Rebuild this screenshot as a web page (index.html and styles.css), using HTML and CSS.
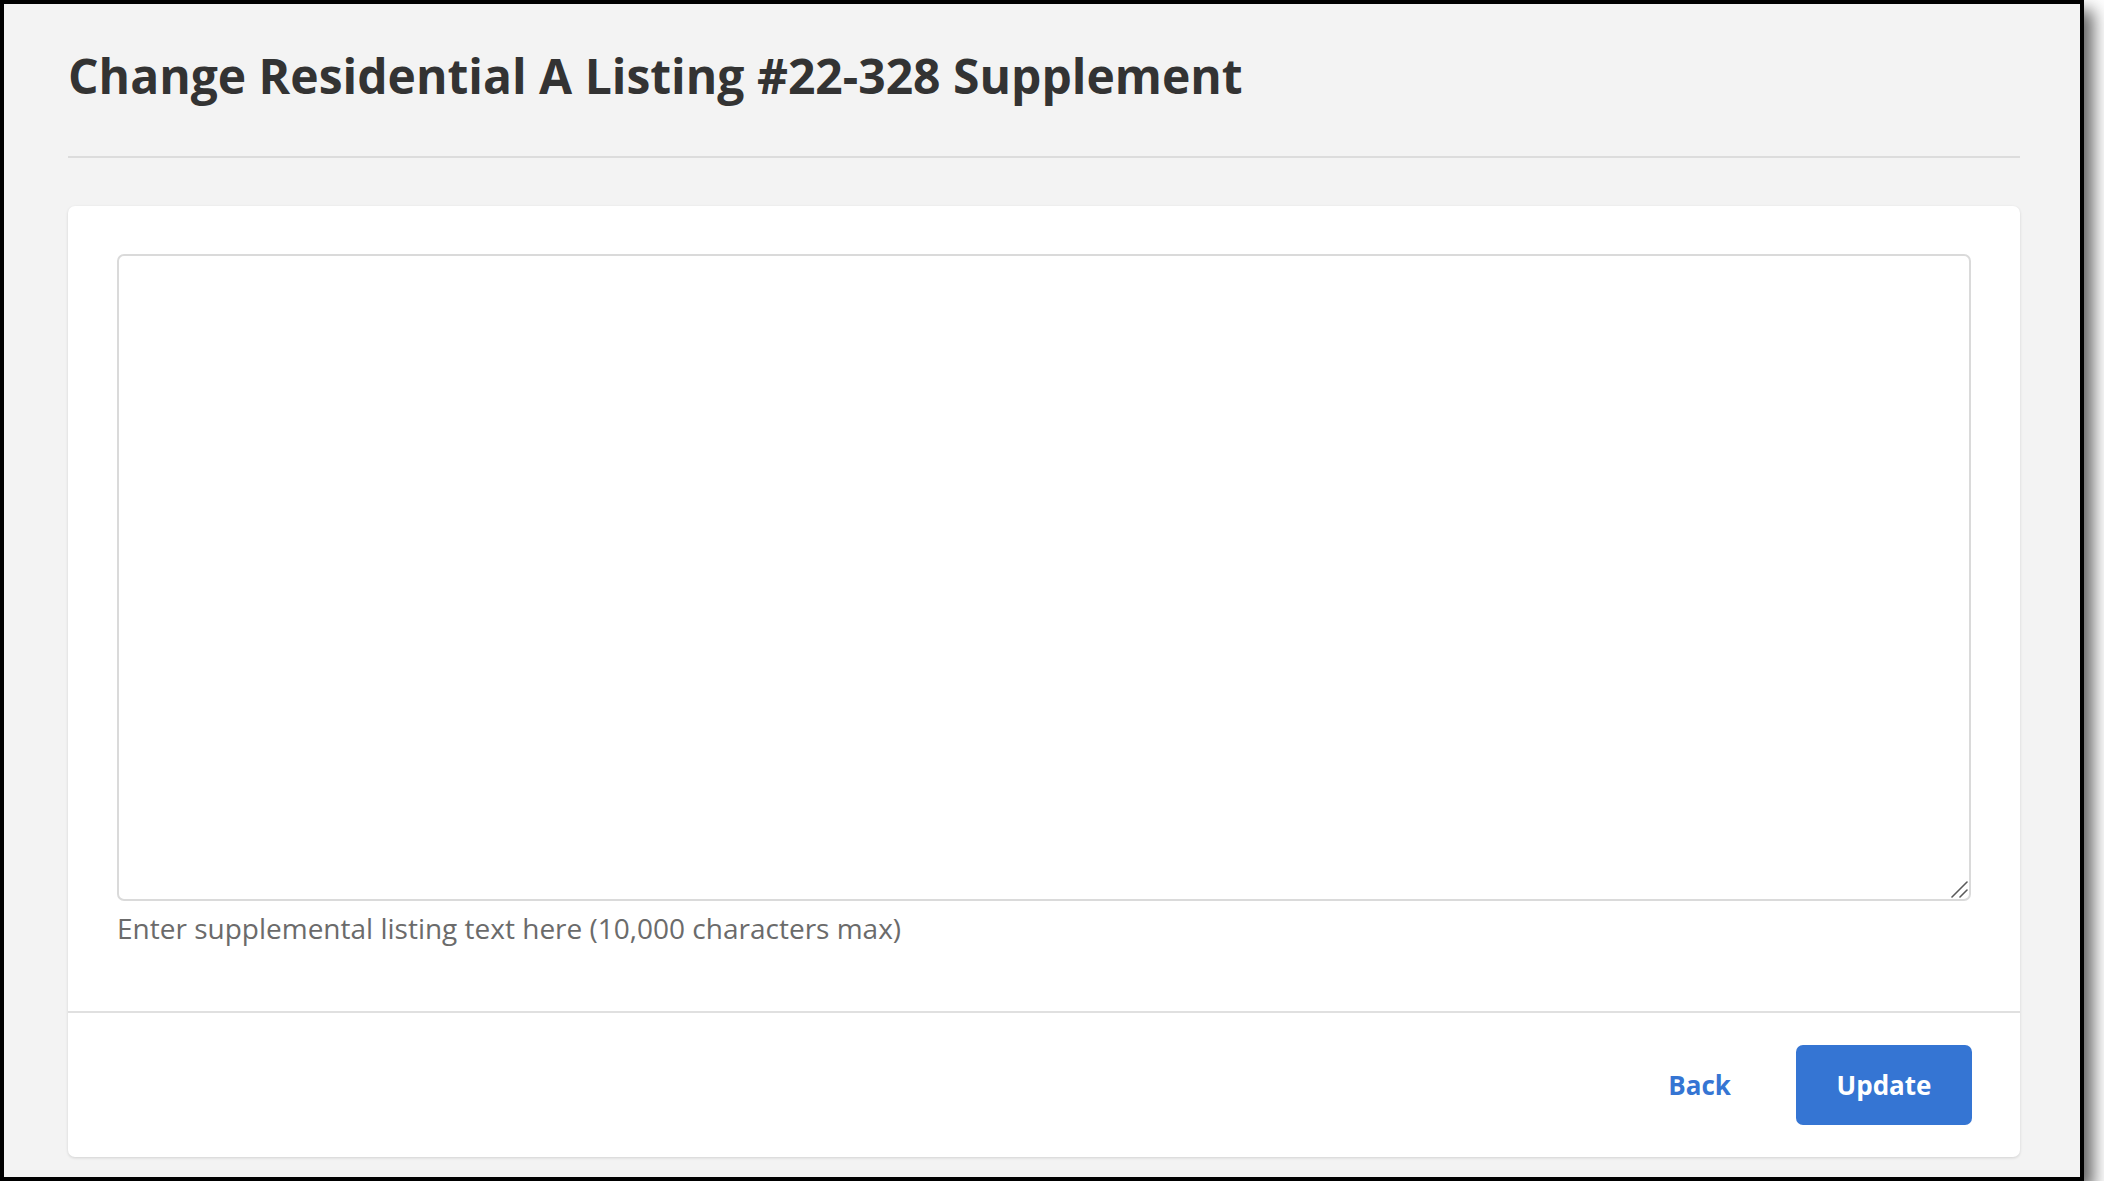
FILE: index.html
```html
<!DOCTYPE html>
<html lang="en">
<head>
<meta charset="utf-8">
<title>Change Residential A Listing #22-328 Supplement</title>
<link rel="stylesheet" href="styles.css">
</head>
<body>
<div class="frame">
  <header class="page-header">
    <h1 class="page-title">Change Residential A Listing #22-328 Supplement</h1>
  </header>
  <section class="card">
    <div class="card-body">
      <div class="input-wrap">
        <textarea class="supplement-input" aria-label="Supplemental listing text"></textarea>
        <svg class="grip" width="18" height="18" viewBox="0 0 18 18" aria-hidden="true">
          <line x1="2" y1="17" x2="17" y2="2" />
          <line x1="10" y1="17" x2="17" y2="10" />
        </svg>
      </div>
      <p class="help-text">Enter supplemental listing text here (10,000 characters max)</p>
    </div>
    <footer class="card-footer">
      <a class="btn-link" href="#">Back</a>
      <button class="btn-primary" type="button">Update</button>
    </footer>
  </section>
</div>
</body>
</html>
```
FILE: styles.css
```css
html, body {
  margin: 0;
  padding: 0;
  background: #ffffff;
}
body {
  font-family: "Open Sans", "Noto Sans", sans-serif;
  color: #333333;
}
.frame {
  width: 1952px;
  height: 1173px;
  padding: 0 60px 0 64px;
  border: 4px solid #000000;
  background: #f3f3f3;
  box-shadow: 9px 10px 16px rgba(0, 0, 0, 0.62);
  display: flex;
  flex-direction: column;
}
.page-header {
  padding-top: 39px;
  padding-bottom: 47px;
  border-bottom: 2px solid #dcdcdc;
}
.page-title {
  margin: 0;
  font-size: 48px;
  line-height: 66px;
  font-weight: 700;
  color: #333333;
}
.card {
  margin-top: 48px;
  background: #ffffff;
  border-radius: 7px;
  box-shadow: 0 1px 3px rgba(0, 0, 0, 0.14);
}
.card-body {
  padding: 48px 49px 64px 49px;
}
.input-wrap {
  position: relative;
}
.supplement-input {
  display: block;
  box-sizing: border-box;
  width: 100%;
  height: 647px;
  margin: 0;
  border: 2px solid #dadada;
  border-radius: 7px;
  background: #ffffff;
  font-family: inherit;
  font-size: 28px;
  resize: none;
  outline: none;
}
.grip {
  position: absolute;
  right: 3px;
  bottom: 3px;
  pointer-events: none;
}
.grip line {
  stroke: #5a5a5a;
  stroke-width: 1.6;
  stroke-linecap: round;
}
.help-text {
  margin: 8px 0 0;
  font-size: 28px;
  line-height: 38px;
  color: #6b6b6b;
}
.card-footer {
  border-top: 2px solid #e0e0e0;
  padding: 32px 48px;
  display: flex;
  justify-content: flex-end;
  align-items: center;
}
.btn-link {
  margin-right: 65px;
  font-size: 26px;
  font-weight: 700;
  color: #3575d3;
  text-decoration: none;
}
.btn-primary {
  width: 176px;
  height: 80px;
  border: none;
  border-radius: 7px;
  background: #3575d3;
  color: #ffffff;
  font-family: inherit;
  font-size: 26px;
  font-weight: 700;
  cursor: pointer;
}
```
